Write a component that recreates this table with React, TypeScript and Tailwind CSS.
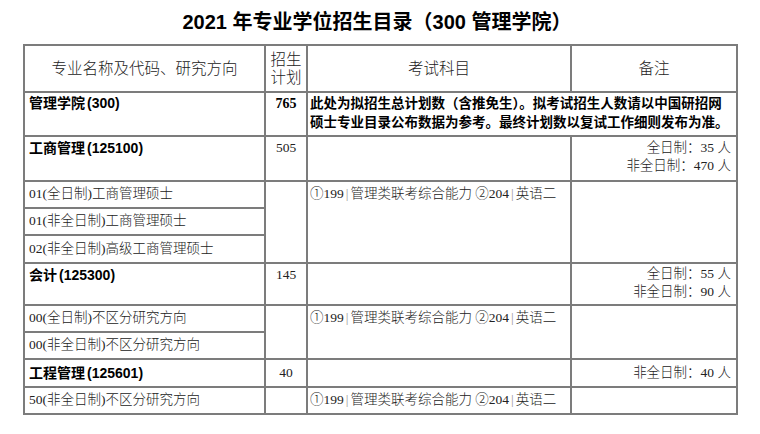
import React from "react";

const S = "font-['Liberation_Serif','Noto_Sans_CJK_SC',serif] font-light text-[#222]";
const B = "font-['Liberation_Sans','Noto_Sans_CJK_SC',sans-serif] font-bold text-black";

function Exam() {
  return (
    <>
      ①199<span className="px-[2px] text-[#999]">|</span>管理类联考综合能力 ②204
      <span className="px-[2px] text-[#999]">|</span>英语二
    </>
  );
}

function Bold({ name, code }: { name: string; code: string }) {
  return (
    <>
      {name}
      <span className="pl-[2px]">({code})</span>
    </>
  );
}

export default function App() {
  return (
    <div className="w-[760px] h-[434px] bg-white overflow-hidden">
      <div className={`pt-[10px] pr-[6px] text-center text-[20px] leading-[24px] ${B}`}>
        2021 年专业学位招生目录（300 管理学院）
      </div>
      <div className="mt-[10px] ml-[23px] w-[715px] bg-[#7c7c7c] p-[2px] grid gap-[2px] grid-cols-[239px_40px_262px_164px] grid-rows-[45px_42px_43px_25px_25px_26px_40px_25px_25px_26px_25px]">
        {/* header */}
        <div className={`bg-white flex items-center justify-center text-[15.5px] ${S}`}>专业名称及代码、研究方向</div>
        <div className={`bg-white flex items-center justify-center text-center text-[15.5px] leading-[18px] ${S}`}>
          招生
          <br />
          计划
        </div>
        <div className={`bg-white flex items-center justify-center text-[15.5px] ${S}`}>考试科目</div>
        <div className={`bg-white flex items-center justify-center text-[15.5px] ${S}`}>备注</div>

        {/* 管理学院 */}
        <div className={`bg-white px-[4px] pt-[1px] text-[14px] leading-[19px] ${B}`}>
          <Bold name="管理学院" code="300" />
        </div>
        <div className={`bg-white text-center pt-[1px] text-[14px] leading-[19px] font-['Liberation_Serif',serif] font-bold text-black`}>765</div>
        <div className={`bg-white col-span-2 px-[2px] pt-[1px] text-[13.5px] leading-[19px] whitespace-nowrap ${B}`}>
          此处为拟招生总计划数（含推免生）。拟考试招生人数请以中国研招网
          <br />
          硕士专业目录公布数据为参考。最终计划数以复试工作细则发布为准。
        </div>

        {/* 工商管理 */}
        <div className={`bg-white px-[4px] pt-[2px] text-[14px] leading-[18px] ${B}`}>
          <Bold name="工商管理" code="125100" />
        </div>
        <div className={`bg-white text-center pt-[2px] text-[13.5px] leading-[18px] ${S}`}>505</div>
        <div className="bg-white" />
        <div className={`bg-white text-right pr-[5px] pt-[2px] text-[13.5px] leading-[18px] ${S}`}>
          全日制：35 人
          <br />
          非全日制：470 人
        </div>

        <div className={`bg-white px-[4px] flex items-center text-[13.5px] ${S}`}>01(全日制)工商管理硕士</div>
        <div className="bg-white row-span-3" />
        <div className={`bg-white row-span-3 px-[2px] pt-[3px] text-[13.5px] leading-[18px] whitespace-nowrap ${S}`}>
          <Exam />
        </div>
        <div className="bg-white row-span-3" />
        <div className={`bg-white px-[4px] flex items-center text-[13.5px] ${S}`}>01(非全日制)工商管理硕士</div>
        <div className={`bg-white px-[4px] flex items-center text-[13.5px] ${S}`}>02(非全日制)高级工商管理硕士</div>

        {/* 会计 */}
        <div className={`bg-white px-[4px] pt-[2px] text-[14px] leading-[18px] ${B}`}>
          <Bold name="会计" code="125300" />
        </div>
        <div className={`bg-white text-center pt-[2px] text-[13.5px] leading-[18px] ${S}`}>145</div>
        <div className="bg-white" />
        <div className={`bg-white text-right pr-[5px] pt-[1px] text-[13.5px] leading-[18px] ${S}`}>
          全日制：55 人
          <br />
          非全日制：90 人
        </div>

        <div className={`bg-white px-[4px] flex items-center text-[13.5px] ${S}`}>00(全日制)不区分研究方向</div>
        <div className="bg-white row-span-2" />
        <div className={`bg-white row-span-2 px-[2px] pt-[3px] text-[13.5px] leading-[18px] whitespace-nowrap ${S}`}>
          <Exam />
        </div>
        <div className="bg-white row-span-2" />
        <div className={`bg-white px-[4px] flex items-center text-[13.5px] ${S}`}>00(非全日制)不区分研究方向</div>

        {/* 工程管理 */}
        <div className={`bg-white px-[4px] flex items-center text-[14px] ${B}`}>
          <Bold name="工程管理" code="125601" />
        </div>
        <div className={`bg-white flex items-center justify-center text-[13.5px] ${S}`}>40</div>
        <div className="bg-white" />
        <div className={`bg-white flex items-center justify-end pr-[5px] text-[13.5px] ${S}`}>非全日制：40 人</div>

        <div className={`bg-white px-[4px] flex items-center text-[13.5px] ${S}`}>50(非全日制)不区分研究方向</div>
        <div className="bg-white" />
        <div className={`bg-white px-[2px] flex items-center text-[13.5px] whitespace-nowrap ${S}`}>
          <Exam />
        </div>
        <div className="bg-white" />
      </div>
    </div>
  );
}
